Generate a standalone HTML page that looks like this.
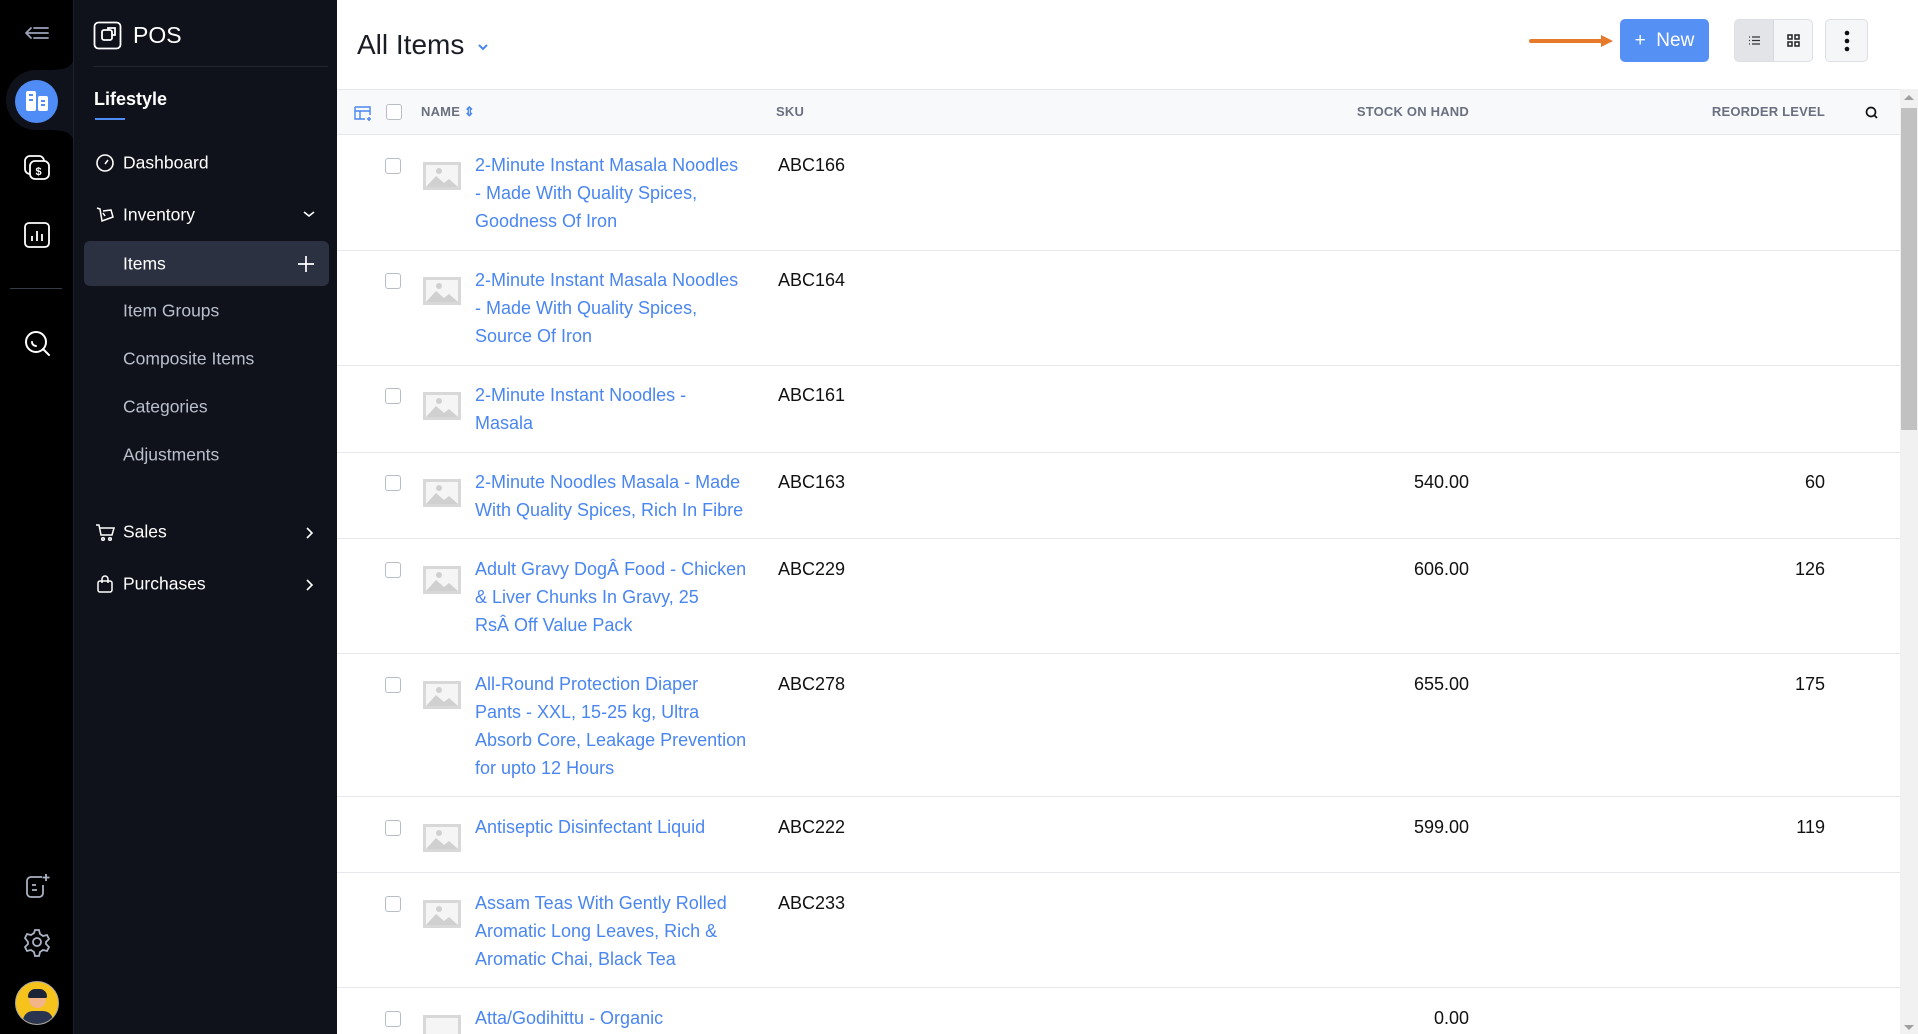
<!DOCTYPE html>
<html><head><meta charset="utf-8"><style>
*{box-sizing:border-box;margin:0;padding:0}
body{width:1918px;height:1034px;overflow:hidden;font-family:"Liberation Sans",sans-serif;background:#fff;position:relative}
.rail{position:absolute;left:0;top:0;width:73px;height:1034px;background:#000}
.side{position:absolute;left:73px;top:0;width:264px;height:1034px;background:#0f121a;border-left:1px solid #1c2130}
.ic{position:absolute;left:22px;width:30px;height:30px}
.nav{position:absolute;left:49px;color:#fff;font-size:17.5px;transform:translateY(-50%)}
.sub{color:#b9bfcc}
.nicon{position:absolute;left:21px;transform:translateY(-50%)}
.main{position:absolute;left:337px;top:0;width:1581px;height:1034px;overflow:hidden}
.row{position:absolute;left:0;width:1563px;border-bottom:1px solid #e6e8ec}
.cb{position:absolute;left:48px;width:16px;height:16px;border:1px solid #b8bcc4;border-radius:3px;background:#fff}
.img{position:absolute;left:85px;width:40px;height:30px}
.nm{position:absolute;left:138px;white-space:nowrap;color:#4a86f0;font-size:18px;line-height:28px}
.sku{position:absolute;left:441px;color:#111;font-size:18px;line-height:28px}
.num{position:absolute;color:#111;font-size:18px;line-height:28px;text-align:right}
.st{left:700px;width:432px}
.ro{left:1088px;width:400px}
.th{position:absolute;top:104px;font-size:13px;font-weight:bold;color:#6b7080;letter-spacing:.2px}
</style></head><body>
<div class="rail">
 <svg class="ic" style="top:18px" viewBox="0 0 30 30" fill="none" stroke="#9aa3b8" stroke-width="1.8"><path d="M12 10H26M4 15H26M12 20H26M4 15l5-5M4 15l5 5" stroke-linecap="round"/></svg>
 <svg style="position:absolute;left:0;top:55px" width="74" height="90" viewBox="0 0 74 90"><path d="M74 0 C74 15 60 15 45 15 L36 15 A30 30 0 0 0 36 75 L45 75 C60 75 74 75 74 90 Z" fill="#0f121a"/></svg>
 <div style="position:absolute;left:15px;top:80px;width:43px;height:43px;border-radius:50%;background:#4f8cf5"></div>
 <svg style="position:absolute;left:25px;top:89px" width="24" height="24" viewBox="0 0 24 24" fill="#fff"><rect x="1" y="2" width="10" height="20" rx="2"/><rect x="13" y="7" width="10" height="15" rx="2"/><rect x="4" y="5" width="4" height="2" fill="#4f8cf5"/><rect x="4" y="10" width="4" height="2" fill="#4f8cf5"/><rect x="16" y="11" width="4" height="2" fill="#4f8cf5"/><rect x="16" y="15" width="4" height="2" fill="#4f8cf5"/></svg>
 <svg class="ic" style="top:152px" viewBox="0 0 30 30" fill="none" stroke="#fff" stroke-width="1.8"><rect x="3" y="4" width="19" height="18" rx="5"/><rect x="8" y="9" width="19" height="18" rx="5" fill="#000"/><text x="13.5" y="23" font-size="11" fill="#fff" stroke="none" font-family="Liberation Sans" font-weight="bold">$</text></svg>
 <svg class="ic" style="top:220px" viewBox="0 0 30 30" fill="none" stroke="#fff" stroke-width="1.8"><rect x="3" y="3" width="24" height="24" rx="4"/><path d="M10 21v-5M15 21V11M20 21v-7"/></svg>
 <div style="position:absolute;left:10px;top:288px;width:52px;height:1px;background:#333a48"></div>
 <svg class="ic" style="top:328px" viewBox="0 0 30 30" fill="none" stroke="#fff" stroke-width="2"><circle cx="14" cy="14" r="10"/><path d="M21 21l6 6M10 14a4 4 0 0 0 4 4" stroke-linecap="round"/></svg>
 <svg class="ic" style="top:871px" viewBox="0 0 30 30" fill="none" stroke="#aab2c4" stroke-width="1.8"><path d="M20 6H9a4 4 0 0 0-4 4v12a4 4 0 0 0 4 4h8a4 4 0 0 0 4-4v-8M10 14h4M10 19h5M24 3v7M20.5 6.5h7"/></svg>
 <svg class="ic" style="top:927px" viewBox="0 0 30 30" fill="none" stroke="#aab2c4" stroke-width="1.8"><circle cx="15" cy="15" r="4"/><path d="M13 3h4l1 4 3 2 4-1 2 4-3 3v2l3 3-2 4-4-1-3 2-1 4h-4l-1-4-3-2-4 1-2-4 3-3v-2L3 11l2-4 4 1 3-2z"/></svg>
 <div style="position:absolute;left:15px;top:981px;width:44px;height:44px;border-radius:50%;background:#f6c21c;border:1px solid #aaa;overflow:hidden">
  <div style="position:absolute;left:13px;top:9px;width:17px;height:17px;border-radius:50%;background:#f3b48a"></div>
  <div style="position:absolute;left:12px;top:7px;width:19px;height:9px;border-radius:9px 9px 2px 2px;background:#1d2438"></div>
  <div style="position:absolute;left:7px;top:29px;width:30px;height:16px;border-radius:10px 10px 0 0;background:#2a3350"></div>
 </div>
</div>
<div class="side">
 <svg style="position:absolute;left:19px;top:21px" width="29" height="29" viewBox="0 0 29 29" fill="none" stroke="#fff" stroke-width="1.8"><rect x="1.5" y="1.5" width="26" height="26" rx="4"/><rect x="9" y="9" width="10" height="10" rx="2"/><path d="M19 14h3V7h-7v2"/></svg>
 <div style="position:absolute;left:59px;top:22px;color:#fff;font-size:23px">POS</div>
 <div style="position:absolute;left:19px;top:66px;width:235px;height:1px;background:#1f2430"></div>
 <div style="position:absolute;left:20px;top:89px;color:#fff;font-size:18px;font-weight:bold">Lifestyle</div>
 <div style="position:absolute;left:21px;top:118px;width:30px;height:2px;background:#4f8cf5"></div>
 <svg class="nicon" style="top:163px" width="20" height="20" viewBox="0 0 20 20" fill="none" stroke="#fff" stroke-width="1.6"><circle cx="10" cy="10" r="8"/><path d="M10 11l3-4"/></svg>
 <div class="nav" style="top:163px">Dashboard</div>
 <svg class="nicon" style="top:215px" width="20" height="20" viewBox="0 0 20 20" fill="none" stroke="#fff" stroke-width="1.5"><path d="M2 3l3 1 2 12 11-4-2-7-8 1M8 8l2 3"/></svg>
 <div class="nav" style="top:215px">Inventory</div>
 <svg style="position:absolute;left:228px;top:209px" width="14" height="10" viewBox="0 0 14 10" fill="none" stroke="#fff" stroke-width="1.6"><path d="M2 3l5 4 5-4"/></svg>
 <div style="position:absolute;left:10px;top:241px;width:245px;height:45px;background:#2b3140;border-radius:6px"></div>
 <div class="nav" style="top:264px">Items</div>
 <svg style="position:absolute;left:223px;top:255px" width="18" height="18" viewBox="0 0 18 18" stroke="#fff" stroke-width="1.7"><path d="M9 1v16M1 9h16"/></svg>
 <div class="nav sub" style="top:311px">Item Groups</div>
 <div class="nav sub" style="top:359px">Composite Items</div>
 <div class="nav sub" style="top:407px">Categories</div>
 <div class="nav sub" style="top:455px">Adjustments</div>
 <svg class="nicon" style="top:532px" width="20" height="20" viewBox="0 0 20 20" fill="none" stroke="#fff" stroke-width="1.5"><path d="M1 3h3l2 10h11l2-7H5"/><circle cx="8" cy="17" r="1.3"/><circle cx="15" cy="17" r="1.3"/></svg>
 <div class="nav" style="top:532px">Sales</div>
 <svg style="position:absolute;left:230px;top:526px" width="10" height="14" viewBox="0 0 10 14" fill="none" stroke="#fff" stroke-width="1.6"><path d="M3 2l5 5-5 5"/></svg>
 <svg class="nicon" style="top:584px" width="20" height="20" viewBox="0 0 20 20" fill="none" stroke="#fff" stroke-width="1.5"><rect x="3" y="7" width="14" height="11" rx="2"/><path d="M7 9V5a3 3 0 0 1 6 0v4"/></svg>
 <div class="nav" style="top:584px">Purchases</div>
 <svg style="position:absolute;left:230px;top:578px" width="10" height="14" viewBox="0 0 10 14" fill="none" stroke="#fff" stroke-width="1.6"><path d="M3 2l5 5-5 5"/></svg>
</div>
<div class="main">
 <div style="position:absolute;left:20px;top:29px;font-size:28px;color:#1b1d24">All Items</div>
 <svg style="position:absolute;left:140px;top:43px" width="12" height="9" viewBox="0 0 12 9" fill="none" stroke="#4a86f0" stroke-width="2"><path d="M2 2l4 4 4-4"/></svg>
 <svg style="position:absolute;left:1192px;top:33px" width="86" height="16" viewBox="0 0 86 16"><path d="M2 8H74" stroke="#e7792a" stroke-width="4" stroke-linecap="round"/><path d="M72 2l12 6-12 6z" fill="#e7792a"/></svg>
 <div style="position:absolute;left:1283px;top:19px;width:89px;height:43px;background:#5590f5;border-radius:5px;color:#fff;font-size:19px;line-height:43px;text-align:center">+&nbsp; New</div>
 <div style="position:absolute;left:1397px;top:19px;width:79px;height:43px;border:1px solid #dcdfe4;border-radius:5px;background:#f5f6f8;overflow:hidden"><div style="width:39px;height:43px;background:#e2e4e8;border-right:1px solid #d6d8dc"></div>
  <svg style="position:absolute;left:13px;top:14px" width="13" height="13" viewBox="0 0 13 13" stroke="#333" stroke-width="1.2"><path d="M4 3h8M4 6.5h8M4 10h8M1 3h1M1 6.5h1M1 10h1"/></svg>
  <svg style="position:absolute;left:52px;top:14px" width="13" height="13" viewBox="0 0 13 13" fill="none" stroke="#222" stroke-width="1.5"><rect x="1" y="1" width="4" height="4"/><rect x="8" y="1" width="4" height="4"/><rect x="1" y="8" width="4" height="4"/><rect x="8" y="8" width="4" height="4"/></svg></div>
 <div style="position:absolute;left:1488px;top:19px;width:43px;height:43px;border:1px solid #dcdfe4;border-radius:5px;background:#f5f6f8"><svg style="position:absolute;left:18px;top:10px" width="6" height="22" viewBox="0 0 6 22" fill="#111"><circle cx="3" cy="3" r="2.3"/><circle cx="3" cy="11" r="2.3"/><circle cx="3" cy="19" r="2.3"/></svg></div>
 <div style="position:absolute;left:0;top:89px;width:1563px;height:46px;background:#f8f9fa;border-top:1px solid #e6e8ec;border-bottom:1px solid #e6e8ec"></div>
 <svg style="position:absolute;left:17px;top:106px" width="18" height="15" viewBox="0 0 18 15" fill="none" stroke="#4a86f0" stroke-width="1.4"><path d="M1 1h15v8M1 1v12h10M1 5h15M6 5v8M15 11v4M13 13h4"/></svg>
 <div class="cb" style="top:104px;left:49px"></div>
 <div class="th" style="left:84px">NAME <span style="color:#4a86f0">&#8661;</span></div>
 <div class="th" style="left:439px">SKU</div>
 <div class="th st" style="text-align:right">STOCK ON HAND</div>
 <div class="th ro" style="text-align:right">REORDER LEVEL</div>
 <svg style="position:absolute;left:1528px;top:106px" width="13" height="13" viewBox="0 0 13 13" fill="none" stroke="#111" stroke-width="1.7"><circle cx="6" cy="6" r="4.5"/><path d="M9.5 9.5l2.5 2.5"/></svg>
 <div style="position:absolute;left:1563px;top:89px;width:18px;height:945px;background:#f1f1f1"></div>
 <div style="position:absolute;left:1564px;top:108px;width:16px;height:322px;background:#c1c1c1"></div>
 <div style="position:absolute;left:1567px;top:95px;border:5px solid transparent;border-bottom-color:#a0a0a0;border-top:0"></div>
 <div style="position:absolute;left:1567px;top:1025px;border:5px solid transparent;border-top-color:#a0a0a0;border-bottom:0"></div>

 <div class="row" style="top:135px;height:116px"></div>
 <div class="row" style="top:251px;height:115px"></div>
 <div class="row" style="top:366px;height:87px"></div>
 <div class="row" style="top:453px;height:86px"></div>
 <div class="row" style="top:539px;height:115px"></div>
 <div class="row" style="top:654px;height:143px"></div>
 <div class="row" style="top:797px;height:76px"></div>
 <div class="row" style="top:873px;height:115px"></div>

 <div class="cb" style="top:158px"></div>
 <svg class="img" style="top:161px" viewBox="0 0 40 30"><rect x="1" y="1" width="38" height="28" fill="#d8d8d8"/><rect x="4" y="4" width="32" height="22" fill="#f5f5f5"/><path d="M4 26l10-11 8 7 5-4 9 8z" fill="#d0d0d0"/><circle cx="17" cy="10" r="3" fill="#d0d0d0"/></svg>
 <div class="nm" style="top:151px">2-Minute Instant Masala Noodles<br>- Made With Quality Spices,<br>Goodness Of Iron</div>
 <div class="sku" style="top:151px">ABC166</div>

 <div class="cb" style="top:273px"></div>
 <svg class="img" style="top:276px" viewBox="0 0 40 30"><rect x="1" y="1" width="38" height="28" fill="#d8d8d8"/><rect x="4" y="4" width="32" height="22" fill="#f5f5f5"/><path d="M4 26l10-11 8 7 5-4 9 8z" fill="#d0d0d0"/><circle cx="17" cy="10" r="3" fill="#d0d0d0"/></svg>
 <div class="nm" style="top:266px">2-Minute Instant Masala Noodles<br>- Made With Quality Spices,<br>Source Of Iron</div>
 <div class="sku" style="top:266px">ABC164</div>

 <div class="cb" style="top:388px"></div>
 <svg class="img" style="top:391px" viewBox="0 0 40 30"><rect x="1" y="1" width="38" height="28" fill="#d8d8d8"/><rect x="4" y="4" width="32" height="22" fill="#f5f5f5"/><path d="M4 26l10-11 8 7 5-4 9 8z" fill="#d0d0d0"/><circle cx="17" cy="10" r="3" fill="#d0d0d0"/></svg>
 <div class="nm" style="top:381px">2-Minute Instant Noodles -<br>Masala</div>
 <div class="sku" style="top:381px">ABC161</div>

 <div class="cb" style="top:475px"></div>
 <svg class="img" style="top:478px" viewBox="0 0 40 30"><rect x="1" y="1" width="38" height="28" fill="#d8d8d8"/><rect x="4" y="4" width="32" height="22" fill="#f5f5f5"/><path d="M4 26l10-11 8 7 5-4 9 8z" fill="#d0d0d0"/><circle cx="17" cy="10" r="3" fill="#d0d0d0"/></svg>
 <div class="nm" style="top:468px">2-Minute Noodles Masala - Made<br>With Quality Spices, Rich In Fibre</div>
 <div class="sku" style="top:468px">ABC163</div>
 <div class="num st" style="top:468px">540.00</div>
 <div class="num ro" style="top:468px">60</div>

 <div class="cb" style="top:562px"></div>
 <svg class="img" style="top:565px" viewBox="0 0 40 30"><rect x="1" y="1" width="38" height="28" fill="#d8d8d8"/><rect x="4" y="4" width="32" height="22" fill="#f5f5f5"/><path d="M4 26l10-11 8 7 5-4 9 8z" fill="#d0d0d0"/><circle cx="17" cy="10" r="3" fill="#d0d0d0"/></svg>
 <div class="nm" style="top:555px">Adult Gravy DogÂ Food - Chicken<br>&amp; Liver Chunks In Gravy, 25<br>RsÂ Off Value Pack</div>
 <div class="sku" style="top:555px">ABC229</div>
 <div class="num st" style="top:555px">606.00</div>
 <div class="num ro" style="top:555px">126</div>

 <div class="cb" style="top:677px"></div>
 <svg class="img" style="top:680px" viewBox="0 0 40 30"><rect x="1" y="1" width="38" height="28" fill="#d8d8d8"/><rect x="4" y="4" width="32" height="22" fill="#f5f5f5"/><path d="M4 26l10-11 8 7 5-4 9 8z" fill="#d0d0d0"/><circle cx="17" cy="10" r="3" fill="#d0d0d0"/></svg>
 <div class="nm" style="top:670px">All-Round Protection Diaper<br>Pants - XXL, 15-25 kg, Ultra<br>Absorb Core, Leakage Prevention<br>for upto 12 Hours</div>
 <div class="sku" style="top:670px">ABC278</div>
 <div class="num st" style="top:670px">655.00</div>
 <div class="num ro" style="top:670px">175</div>

 <div class="cb" style="top:820px"></div>
 <svg class="img" style="top:823px" viewBox="0 0 40 30"><rect x="1" y="1" width="38" height="28" fill="#d8d8d8"/><rect x="4" y="4" width="32" height="22" fill="#f5f5f5"/><path d="M4 26l10-11 8 7 5-4 9 8z" fill="#d0d0d0"/><circle cx="17" cy="10" r="3" fill="#d0d0d0"/></svg>
 <div class="nm" style="top:813px">Antiseptic Disinfectant Liquid</div>
 <div class="sku" style="top:813px">ABC222</div>
 <div class="num st" style="top:813px">599.00</div>
 <div class="num ro" style="top:813px">119</div>

 <div class="cb" style="top:896px"></div>
 <svg class="img" style="top:899px" viewBox="0 0 40 30"><rect x="1" y="1" width="38" height="28" fill="#d8d8d8"/><rect x="4" y="4" width="32" height="22" fill="#f5f5f5"/><path d="M4 26l10-11 8 7 5-4 9 8z" fill="#d0d0d0"/><circle cx="17" cy="10" r="3" fill="#d0d0d0"/></svg>
 <div class="nm" style="top:889px">Assam Teas With Gently Rolled<br>Aromatic Long Leaves, Rich &amp;<br>Aromatic Chai, Black Tea</div>
 <div class="sku" style="top:889px">ABC233</div>

 <div class="cb" style="top:1011px"></div>
 <svg class="img" style="top:1014px" viewBox="0 0 40 30"><rect x="1" y="1" width="38" height="28" fill="#d8d8d8"/><rect x="4" y="4" width="32" height="22" fill="#f5f5f5"/></svg>
 <div class="nm" style="top:1004px">Atta/Godihittu - Organic</div>
 <div class="num st" style="top:1004px">0.00</div>
</div>
</body></html>
